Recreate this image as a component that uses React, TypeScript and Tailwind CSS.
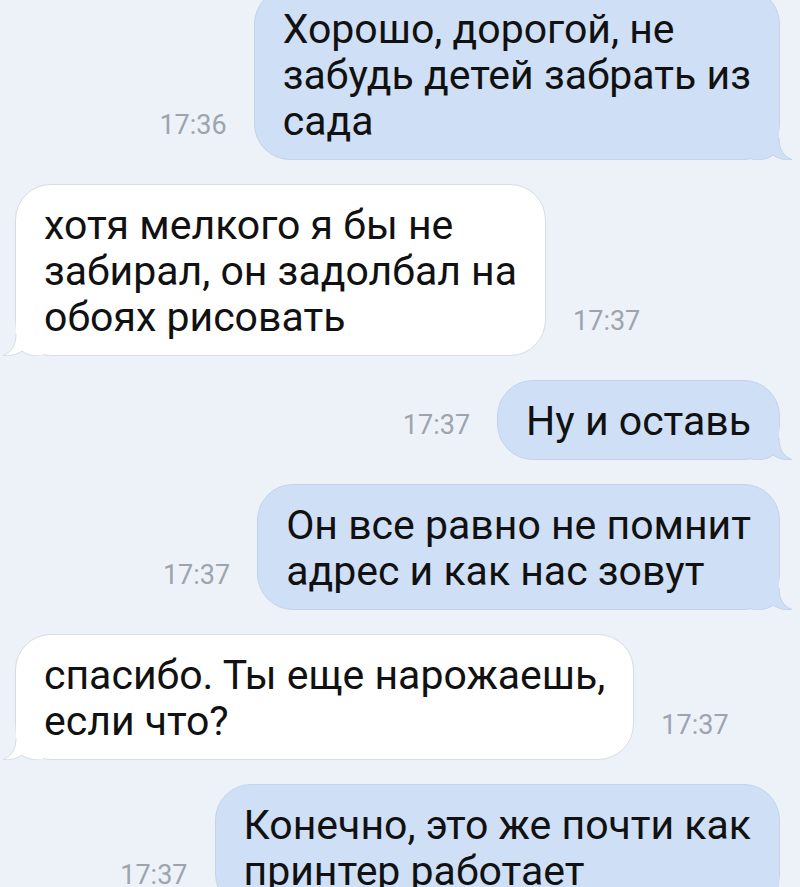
import React from "react";

type Msg = { out: boolean; lines: string[]; time: string };

const MESSAGES: Msg[] = [
  { out: true, lines: ["Хорошо, дорогой, не", "забудь детей забрать из", "сада"], time: "17:36" },
  { out: false, lines: ["хотя мелкого я бы не", "забирал, он задолбал на", "обоях рисовать"], time: "17:37" },
  { out: true, lines: ["Ну и оставь"], time: "17:37" },
  { out: true, lines: ["Он все равно не помнит", "адрес и как нас зовут"], time: "17:37" },
  { out: false, lines: ["спасибо. Ты еще нарожаешь,", "если что?"], time: "17:37" },
  { out: true, lines: ["Конечно, это же почти как", "принтер работает"], time: "17:37" },
];

// хвостик пузыря снизу (правый для исходящих, левый для входящих)
function Tail({ out }: { out: boolean }) {
  if (out) {
    return (
      <svg
        className="pointer-events-none absolute -right-[13px] -bottom-px"
        width="40"
        height="40"
        viewBox="0 0 40 40"
      >
        <path
          d="M0 0 H27 V18 C27 29 31 36 40 39.5 C33 40.5 26 38.5 21 35 C17 38.5 11 40 0 40 Z"
          fill="#cfdff5"
        />
        <path
          d="M27 18 C27 29 31 36 40 39.5 C33 40.5 26 38.5 21 35 C17 38.5 11 40 0 40"
          fill="none"
          stroke="#c2d3ea"
          strokeWidth="1"
        />
      </svg>
    );
  }
  return (
    <svg
      className="pointer-events-none absolute -left-[13px] -bottom-px"
      width="40"
      height="40"
      viewBox="0 0 40 40"
    >
      <path
        d="M40 0 H13 V18 C13 29 9 36 0 39.5 C7 40.5 14 38.5 19 35 C23 38.5 29 40 40 40 Z"
        fill="#ffffff"
      />
      <path
        d="M13 18 C13 29 9 36 0 39.5 C7 40.5 14 38.5 19 35 C23 38.5 29 40 40 40"
        fill="none"
        stroke="#d6dce5"
        strokeWidth="1"
      />
    </svg>
  );
}

function Bubble({ msg, first }: { msg: Msg; first?: boolean }) {
  const time = (
    <span
      className={
        "mb-[12px] text-[27px] leading-[46px] text-[#9ea4ad] " +
        (msg.out ? "mr-[27px]" : "ml-[27px]")
      }
    >
      {msg.time}
    </span>
  );
  return (
    <div
      className={
        "flex items-end " +
        (msg.out ? "justify-end pr-[20px]" : "justify-start pl-[15px]") +
        (first ? " -mt-[12px]" : "")
      }
    >
      {msg.out && time}
      <div
        className={
          "relative rounded-[36px] border px-[28px] pt-[17px] pb-[15px] text-[41px] leading-[46px] text-[#111111] " +
          (msg.out ? "border-[#c2d3ea] bg-[#cfdff5]" : "border-[#d6dce5] bg-white")
        }
      >
        {msg.lines.map((l) => (
          <div key={l} className="whitespace-nowrap">
            {l}
          </div>
        ))}
        <Tail out={msg.out} />
      </div>
      {!msg.out && time}
    </div>
  );
}

export default function App() {
  return (
    <div
      className="flex h-[887px] w-[800px] flex-col gap-[24px] overflow-hidden bg-[#edf2f9]"
      style={{ fontFamily: "Roboto, 'Noto Sans', sans-serif" }}
    >
      {MESSAGES.map((m, i) => (
        <Bubble key={i} msg={m} first={i === 0} />
      ))}
    </div>
  );
}
